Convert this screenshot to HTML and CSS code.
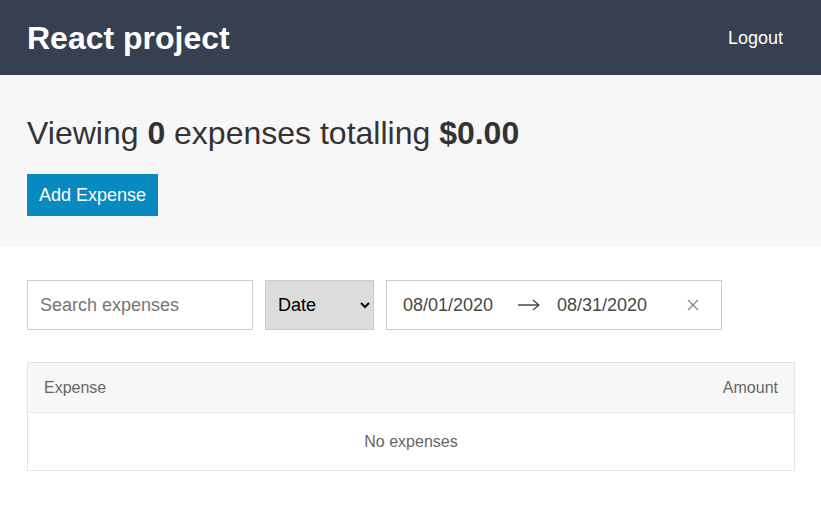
FILE: index.html
```html
<!DOCTYPE html>
<html>
<head>
<meta charset="utf-8">
<link rel="stylesheet" href="styles.css">
</head>
<body>
<header class="header">
  <div class="content-container header__content">
    <h1 class="header__title">React project</h1>
    <button class="button-link">Logout</button>
  </div>
</header>
<section class="page-header">
  <div class="content-container">
    <h2 class="page-header__title">Viewing <span>0</span> expenses totalling <span>$0.00</span></h2>
    <div class="page-header__actions">
      <button class="button">Add Expense</button>
    </div>
  </div>
</section>
<main class="content-container">
  <div class="filters">
    <input class="text-input" type="text" placeholder="Search expenses">
    <select class="select"><option>Date</option><option>Amount</option></select>
    <div class="date-range">
      <span class="date-range__input">08/01/2020</span>
      <svg class="date-range__arrow" width="24" height="24" viewBox="0 0 24 24"><path d="M1 12h21M16 7l6 5-6 5" fill="none" stroke="#484848" stroke-width="1.3"/></svg>
      <span class="date-range__input">08/31/2020</span>
      <svg class="date-range__close" width="12" height="12" viewBox="0 0 12 12"><path d="M1 1l10 10M11 1L1 11" stroke="#8a8a8a" stroke-width="1.4"/></svg>
    </div>
  </div>
  <div class="list">
    <div class="list-header"><span>Expense</span><span>Amount</span></div>
    <div class="list-body"><div class="list-item--message">No expenses</div></div>
  </div>
</main>
</body>
</html>
```
FILE: styles.css
```css
* { box-sizing: border-box; }
body {
  margin: 0;
  font-family: "Liberation Sans", Arial, sans-serif;
  color: #333;
  font-size: 16px;
  line-height: 1.6;
  background: #fff;
}
.content-container {
  padding: 0 26px 0 27px;
}
.header {
  background: #364051;
  height: 75px;
}
.header__content {
  display: flex;
  justify-content: space-between;
  align-items: center;
  height: 75px;
}
.header__title {
  margin: 0;
  color: #fff;
  font-size: 32px;
  font-weight: bold;
  line-height: 1;
}
.button-link {
  background: none;
  border: none;
  color: #fff;
  font-family: inherit;
  font-size: 18px;
  padding: 2px 0 0;
  margin-right: 12px;
}
.page-header {
  background: #f7f7f7;
  padding: 31px 0 0;
  height: 172px;
}
.page-header__title {
  margin: 0;
  font-weight: 300;
  font-size: 32px;
  line-height: 54px;
}
.page-header__title span { font-weight: bold; }
.page-header__actions {
  margin-top: 14px;
}
.button {
  background: #0889c0;
  border: none;
  color: #fff;
  font-family: inherit;
  font-size: 18px;
  line-height: 1;
  height: 42px;
  padding: 0 12px;
  margin: 0;
}
.filters {
  display: flex;
  gap: 12px;
  margin-top: 33px;
  margin-bottom: 32px;
}
.text-input {
  border: 1px solid #cacccd;
  height: 50px;
  width: 226px;
  padding: 8px 12px;
  font-family: inherit;
  font-size: 18px;
  color: #333;
}
.text-input::placeholder { color: #757575; }
.select {
  height: 50px;
  width: 109px;
  border: 1px solid #cacccd;
  background: #dcdcdc;
  font-family: inherit;
  font-size: 18px;
  color: #000;
  padding: 0 8px;
  border-radius: 0;
}
.date-range {
  height: 50px;
  width: 336px;
  border: 1px solid #cacccd;
  display: flex;
  align-items: center;
  padding-left: 16px;
  color: #484848;
  font-size: 18px;
}
.date-range__input { width: 114px; }
.date-range__arrow { margin-right: 16px; }
.date-range__close { margin-left: 16px; }
.list {
  border: 1px solid #e5e5e5;
}
.list-header {
  background: #f7f7f7;
  border-bottom: 1px solid #e5e5e5;
  color: #666;
  display: flex;
  justify-content: space-between;
  padding: 0 16px;
  height: 50px;
  align-items: center;
}
.list-item--message {
  color: #666;
  text-align: center;
  height: 57px;
  display: flex;
  align-items: center;
  justify-content: center;
}
```
